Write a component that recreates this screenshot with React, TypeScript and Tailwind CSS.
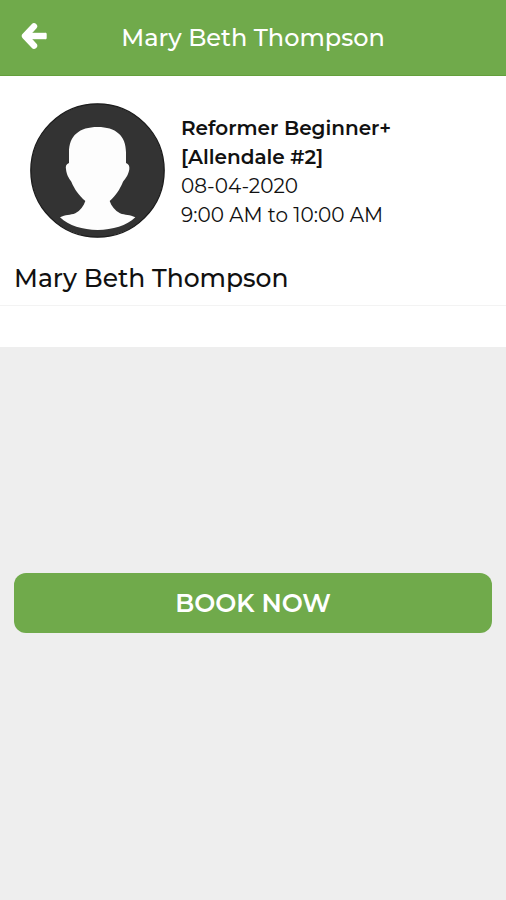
import React from 'react';

const booking = {
  instructor: 'Mary Beth Thompson',
  className: 'Reformer Beginner+',
  location: '[Allendale #2]',
  date: '08-04-2020',
  time: '9:00 AM to 10:00 AM',
};

function BackArrow() {
  return (
    <svg viewBox="-1 0 28 28" className="w-7 h-7" fill="none" stroke="currentColor" aria-hidden="true">
      <path d="M13 4.4L4 14l9 9.6" strokeWidth="6.4" strokeLinejoin="round" strokeLinecap="round" />
      <path d="M5 14h19.5" strokeWidth="6.4" />
      <path d="M24.5 12v4" strokeWidth="2.4" strokeLinecap="round" />
    </svg>
  );
}

function Avatar() {
  return (
    <svg viewBox="0 0 405 405" className="w-[135px] h-[135px] shrink-0" role="img" aria-label="Instructor">
      <circle cx="202.5" cy="202.5" r="200" fill="#333333" stroke="#1c1c1c" strokeWidth="4" />
      <path
        d="M203 72C148 72 117 98 117 148V180C109 183 106 188 108 199C110 216 116 225 124 236C134 260 147 277 166 294C161 310 151 322 136 331C121 337 106 335 90 343C116 368 158 381 203 381C248 381 290 368 316 343C300 335 285 337 270 331C255 322 244 310 239 294C258 277 269 260 279 236C288 225 295 216 298 199C299 188 296 183 288 180V148C288 98 257 72 203 72Z"
        fill="#fdfdfd"
      />
    </svg>
  );
}

export default function App() {
  return (
    <div className="min-h-screen bg-[#eeeeee] font-['Montserrat','Inter',sans-serif] text-[#111111]">
      <header className="grid grid-cols-[1fr_auto_1fr] items-center h-19 px-5 bg-[#70aa4b] border-b border-[#649f3c] text-white">
        <button type="button" aria-label="Back" className="justify-self-start pb-1">
          <BackArrow />
        </button>
        <h1 className="text-[24px] leading-8 font-medium">{booking.instructor}</h1>
      </header>

      <main>
        <section className="bg-white pt-[27px] pb-[41px]">
          <div className="flex items-center gap-4 pl-[30px] pr-4">
            <Avatar />
            <div className="pt-0.5 text-[20px] leading-[29px]">
              <p className="font-semibold">{booking.className}</p>
              <p className="font-semibold">{booking.location}</p>
              <p>{booking.date}</p>
              <p>{booking.time}</p>
            </div>
          </div>
          <h2 className="mt-6 px-3.5 pb-[11px] border-b border-[#f3f3f3] text-[25px] leading-8 font-medium">
            {booking.instructor}
          </h2>
        </section>

        <div className="px-3.5 pt-[226px]">
          <button type="button" className="w-full h-15 rounded-xl bg-[#70aa4b] text-white text-[25px] leading-8 font-semibold">
            BOOK NOW
          </button>
        </div>
      </main>
    </div>
  );
}
